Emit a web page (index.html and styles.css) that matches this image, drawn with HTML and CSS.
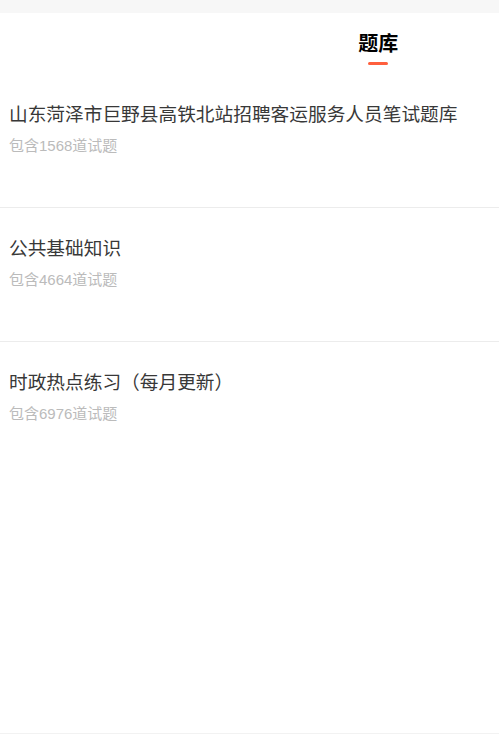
FILE: index.html
```html
<!DOCTYPE html>
<html lang="zh-CN">
<head>
  <meta charset="UTF-8">
  <title>题库</title>
  <meta name="viewport" content="width=device-width, initial-scale=1.0">
  <link rel="stylesheet" href="styles.css">
</head>
<body>

  <div class="top-gap"></div>

  <div class="tabs">
    <div class="tab"></div>
    <div class="tab active">
      <span class="tab-label">题库</span>
      <span class="tab-line"></span>
    </div>
  </div>

  <ul class="bank-list">
    <li class="bank-item">
      <div class="bank-title">山东菏泽市巨野县高铁北站招聘客运服务人员笔试题库</div>
      <div class="bank-count">包含1568道试题</div>
    </li>
    <li class="bank-item">
      <div class="bank-title">公共基础知识</div>
      <div class="bank-count">包含4664道试题</div>
    </li>
    <li class="bank-item">
      <div class="bank-title">时政热点练习（每月更新）</div>
      <div class="bank-count">包含6976道试题</div>
    </li>
  </ul>

  <div class="bottom-line"></div>

</body>
</html>
```

FILE: styles.css
```css
* { box-sizing: border-box; margin: 0; padding: 0; }
html, body { height: 100%; }
body {
  font-family: "Liberation Sans", Arial, "Noto Sans CJK SC", sans-serif;
  background-color: #fff;
  color: #333;
  display: flex;
  flex-direction: column;
}

.top-gap {
  height: 13px;
  background-color: #f7f7f7;
}

.tabs {
  display: flex;
  height: 61px;
}

.tab {
  flex: 1;
  display: flex;
  flex-direction: column;
  align-items: center;
  padding-top: 18px;
}

.tab-label {
  font-size: 20px;
  font-weight: bold;
  line-height: 26px;
  color: #000;
  padding-left: 8px;
}

.tab-line {
  width: 20px;
  height: 3px;
  margin-top: 5px;
  margin-left: 8px;
  border-radius: 2px;
  background-color: #ff5f3d;
}

.bank-list {
  list-style: none;
  flex: 1;
}

.bank-item {
  height: 134px;
  padding: 27px 9px 0;
  border-bottom: 1px solid #ececec;
}

.bank-item:last-child {
  border-bottom: none;
}

.bank-title {
  font-size: 18.7px;
  line-height: 28px;
  color: #383838;
}

.bank-count {
  margin-top: 7px;
  font-size: 15px;
  line-height: 20px;
  color: #bbb;
}

.bottom-line {
  height: 1px;
  background-color: #f2f2f2;
}
```
